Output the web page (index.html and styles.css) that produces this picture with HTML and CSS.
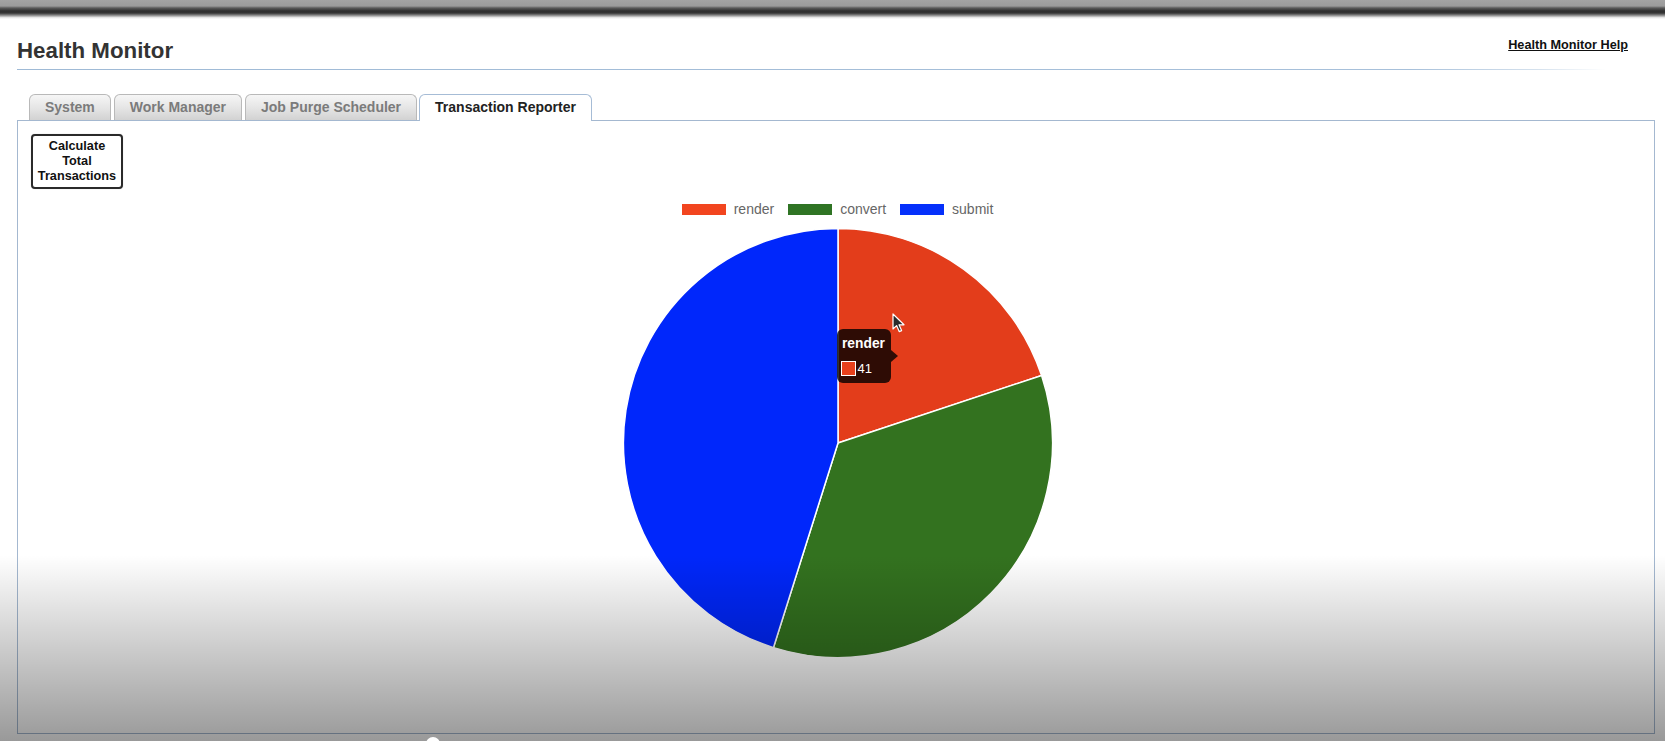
FILE: index.html
```html
<!DOCTYPE html>
<html lang="en">
<head>
<meta charset="utf-8">
<title>Health Monitor</title>
<link rel="stylesheet" href="styles.css">
</head>
<body>
<div class="topbar"></div>
<div class="page">
  <div class="header">
    <h1 class="title">Health Monitor</h1>
    <a class="help" href="#">Health Monitor Help</a>
  </div>
  <div class="rule"></div>
  <div class="tabs">
    <div class="tab">System</div>
    <div class="tab">Work Manager</div>
    <div class="tab">Job Purge Scheduler</div>
    <div class="tab active">Transaction Reporter</div>
  </div>
  <div class="panel">
    <button class="calc">Calculate<br>Total<br>Transactions</button>
    <div class="chart">
      <div class="legend">
        <div class="legend-item"><span class="swatch sw-render"></span><span>render</span></div>
        <div class="legend-item"><span class="swatch sw-convert"></span><span>convert</span></div>
        <div class="legend-item"><span class="swatch sw-submit"></span><span>submit</span></div>
      </div>
      <div class="pie-wrap">
        <svg class="pie" width="432" height="432" viewBox="0 0 432 432">
          <path d="M216,216 L216,1.5 A214.5,214.5 0 0 1 419.6,148.5 Z" fill="#e33d1b" stroke="#fff" stroke-width="1.5" stroke-linejoin="round"/>
          <path d="M216,216 L419.6,148.5 A214.5,214.5 0 0 1 151.5,420.6 Z" fill="#33721f" stroke="#fff" stroke-width="1.5" stroke-linejoin="round"/>
          <path d="M216,216 L151.5,420.6 A214.5,214.5 0 0 1 216,1.5 Z" fill="#0027fb" stroke="#fff" stroke-width="1.5" stroke-linejoin="round"/>
        </svg>
        <div class="tooltip">
          <div class="tip-title">render</div>
          <div class="tip-body"><span class="tip-swatch"></span><span>41</span></div>
        </div>
        <svg class="cursor" width="14" height="20" viewBox="0 0 14 20">
          <path d="M1,1 L1,16 L4.6,12.6 L7.2,18.6 L9.6,17.6 L7,11.8 L12,11.8 Z" fill="#2a2a2a" stroke="#fff" stroke-width="1.2" stroke-linejoin="round"/>
        </svg>
      </div>
    </div>
  </div>
</div>
<div class="shade"></div>
<div class="scrub"></div>
</body>
</html>
```
FILE: styles.css
```css
html, body {
  margin: 0;
  padding: 0;
}
body {
  position: relative;
  width: 1665px;
  height: 741px;
  overflow: hidden;
  background: #fff;
  font-family: "Liberation Sans", Arial, Helvetica, sans-serif;
}
.topbar {
  height: 19px;
  background: linear-gradient(to bottom, #a3a3a3 0px, #9b9b9b 6px, #5a5a5a 8px, #2e2e2e 11px, #353535 13px, #7d7d7d 15px, #e6e6e6 17.5px, #ffffff 19px);
}
.page {
  padding: 0 10px 0 17px;
}
.header {
  display: flex;
  justify-content: space-between;
  align-items: flex-start;
  margin-top: 19px;
  padding-right: 27px;
  height: 25px;
}
.title {
  margin: 0;
  font-size: 22.3px;
  line-height: 25px;
  font-weight: bold;
  color: #333;
}
.help {
  font-size: 12.7px;
  line-height: 15px;
  font-weight: bold;
  color: #111;
  text-decoration: underline;
}
.rule {
  margin-top: 6px;
  height: 1px;
  background: linear-gradient(to right, #9fbad6 0%, #a7c0da 85%, #d6e2ee 93%, rgba(255,255,255,0) 97%);
}
.tabs {
  display: flex;
  align-items: flex-end;
  gap: 3px;
  margin-top: 24px;
  padding-left: 12px;
}
.tab {
  height: 26px;
  box-sizing: border-box;
  padding: 0 15px;
  border: 1px solid #b9b9b9;
  border-bottom: none;
  border-radius: 6px 6px 0 0;
  background: linear-gradient(to bottom, #f6f6f6 0%, #e4e4e4 55%, #d2d2d2 100%);
  font-size: 14px;
  line-height: 25px;
  font-weight: bold;
  color: #7b7b7b;
  white-space: nowrap;
}
.tab.active {
  position: relative;
  z-index: 1;
  height: 27px;
  margin-bottom: -1px;
  margin-left: -1px;
  padding-bottom: 1px;
  border-color: #a6bcd6;
  background: #fff;
  color: #222;
}
.panel {
  box-sizing: border-box;
  height: 614px;
  border: 1px solid #a4b8d0;
  padding: 13px 12px 0 13px;
}
.calc {
  display: block;
  box-sizing: border-box;
  width: 92px;
  height: 55px;
  padding: 0;
  border: 2px solid #2a2a2a;
  border-radius: 4px;
  background: #fff;
  font-family: "Liberation Sans", Arial, sans-serif;
  font-size: 12.7px;
  line-height: 14.8px;
  font-weight: bold;
  color: #111;
  text-align: center;
  box-shadow: 0 0 1px rgba(0,0,0,0.3);
}
.chart {
  display: flex;
  flex-direction: column;
  align-items: center;
  margin-top: 10px;
  padding-left: 2px;
}
.legend {
  display: flex;
  align-items: center;
  gap: 14px;
  height: 20px;
}
.legend-item {
  display: flex;
  align-items: center;
  gap: 8px;
  font-size: 14px;
  line-height: 20px;
  color: #666;
}
.swatch {
  display: block;
  width: 44px;
  height: 11px;
}
.sw-render { background: #f2451f; }
.sw-convert { background: #2f7424; }
.sw-submit { background: #0530fb; }
.pie-wrap {
  position: relative;
  width: 432px;
  height: 432px;
  margin-top: 8px;
}
.pie {
  display: block;
}
.tooltip {
  position: absolute;
  left: 215.5px;
  top: 102px;
  width: 54px;
  height: 54px;
  box-sizing: border-box;
  padding: 7px 4px 0 4px;
  border-radius: 6px;
  background: rgba(0, 0, 0, 0.8);
  color: #fff;
}
.tooltip::after {
  content: "";
  position: absolute;
  right: -7px;
  top: 21px;
  border-left: 7px solid rgba(0, 0, 0, 0.8);
  border-top: 6px solid transparent;
  border-bottom: 6px solid transparent;
}
.tip-title {
  padding-left: 1px;
  font-size: 13.8px;
  line-height: 16px;
  font-weight: bold;
}
.tip-body {
  display: flex;
  align-items: center;
  gap: 1.5px;
  margin-top: 9px;
  height: 15px;
  font-size: 13px;
  line-height: 15px;
}
.tip-swatch {
  display: block;
  box-sizing: border-box;
  width: 15px;
  height: 15px;
  border: 1.5px solid #fff;
  background: #e8401c;
}
.cursor {
  position: absolute;
  left: 270.5px;
  top: 86px;
}
.shade {
  position: absolute;
  left: 0;
  top: 555px;
  width: 100%;
  height: 186px;
  z-index: 5;
  pointer-events: none;
  background: linear-gradient(to bottom, rgba(0,0,0,0) 0%, rgba(0,0,0,0.2) 50%, rgba(0,0,0,0.4) 100%);
}
.scrub {
  position: absolute;
  left: 426px;
  top: 737px;
  width: 14px;
  height: 14px;
  border-radius: 50%;
  background: #fff;
  z-index: 6;
}
```
